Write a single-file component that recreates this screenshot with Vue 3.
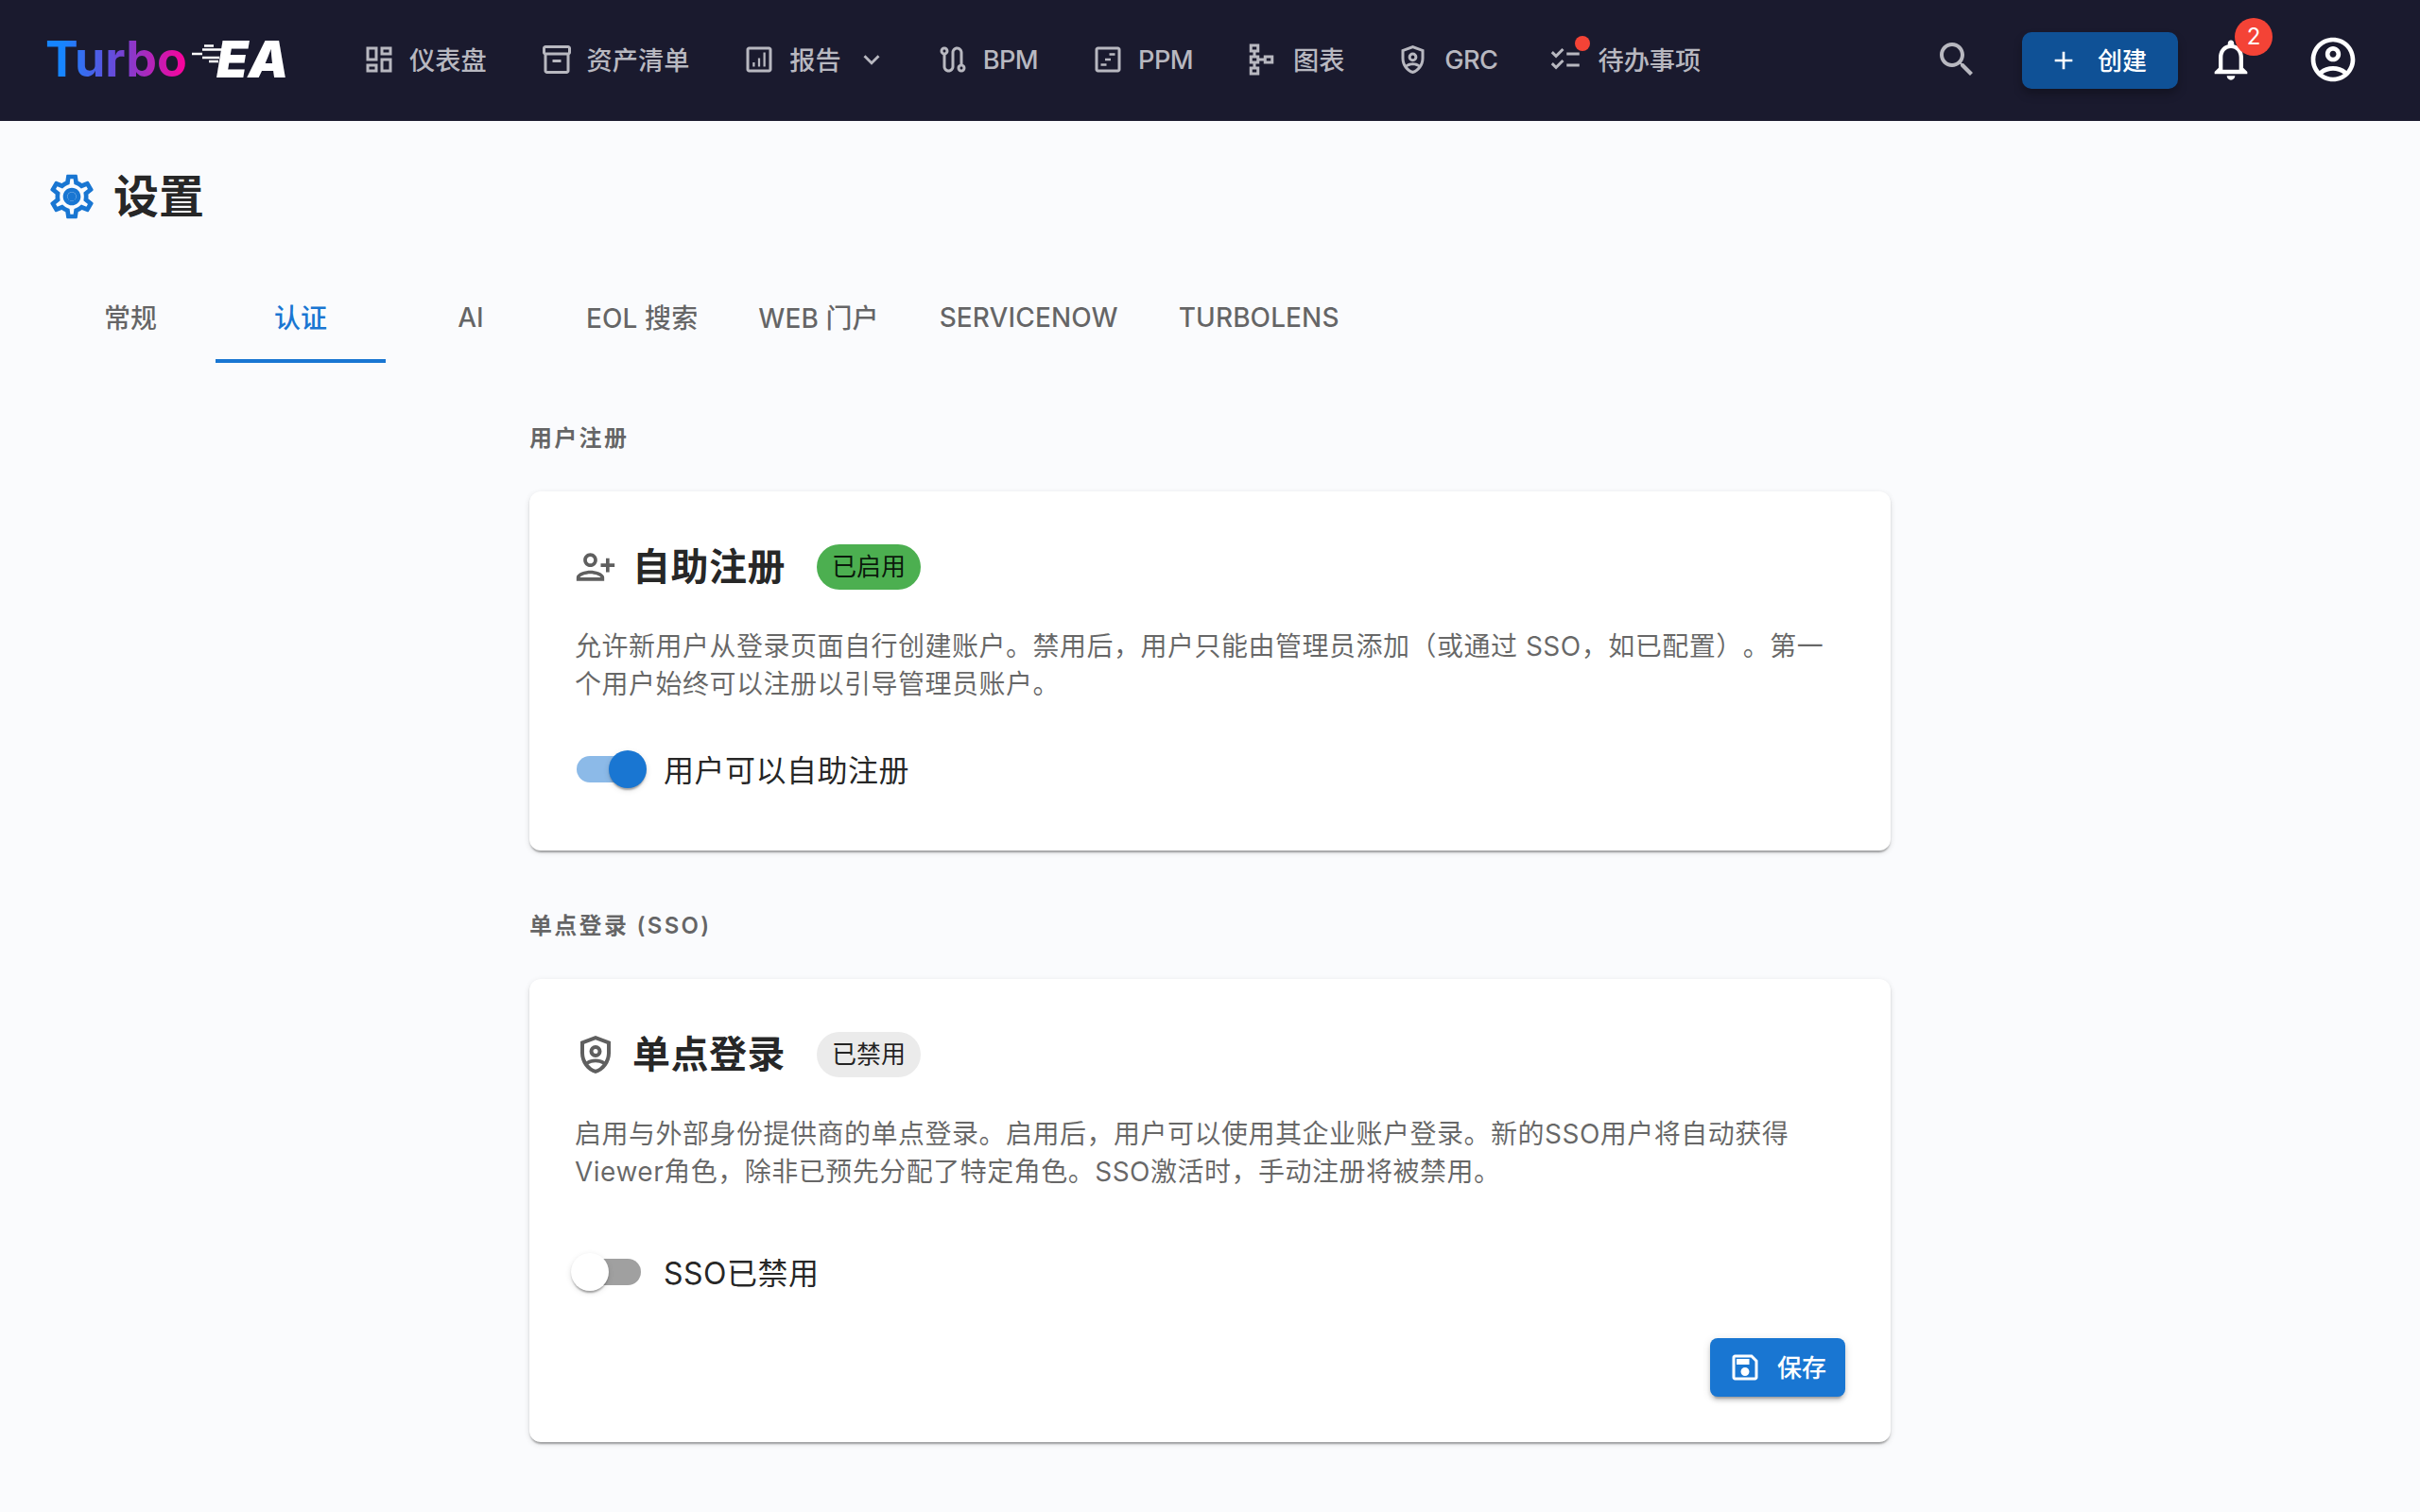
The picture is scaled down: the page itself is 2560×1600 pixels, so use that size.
<template>
  <div class="app">
    <header class="topbar">
      <div class="logo">
        <span class="logo-turbo">Turbo</span>
        <svg class="logo-lines" viewBox="0 0 36 24" aria-hidden="true">
          <path d="M17 1.500h10M15 5.500h22M4 10h11M15 14h18M22 18h10" />
        </svg>
        <span class="logo-ea">EA</span>
      </div>

      <nav class="nav">
        <button v-for="item in navItems" :key="item.label" class="nav-btn">
          <span class="nav-icon">
            <svg :viewBox="item.box || '0 0 24 24'"><path :d="item.icon" /></svg>
            <span v-if="item.dot" class="nav-dot"></span>
          </span>
          <span class="nav-label" :class="{ latin: !hasCjk(item.label) }">{{ item.label }}</span>
          <svg v-if="item.caret" class="nav-caret" viewBox="0 0 24 24"><path :d="icons.caret" /></svg>
        </button>
      </nav>

      <div class="topbar-right">
        <svg class="search-icon" viewBox="0 0 24 24"><path :d="icons.search" /></svg>
        <button class="create-btn">
          <svg viewBox="0 0 24 24"><path d="M19 13h-6v6h-2v-6H5v-2h6V5h2v6h6v2z" /></svg>
          <span class="cjk-text">创建</span>
        </button>
        <div class="bell">
          <svg viewBox="0 0 24 24"><path :d="icons.bell" /></svg>
          <span class="bell-badge">2</span>
        </div>
        <svg class="account-icon" viewBox="0 0 24 24"><path :d="icons.account" /></svg>
      </div>
    </header>

    <main class="page">
      <div class="page-title">
        <svg viewBox="0 0 24 24">
          <path :d="icons.gear" />
          <circle cx="12" cy="12" r="2" />
        </svg>
        <h1>设置</h1>
      </div>

      <div class="tabs">
        <button
          v-for="tab in tabs"
          :key="tab"
          class="tab"
          :class="{ active: tab === activeTab, 'tab-cjk': hasCjk(tab) }"
          @click="activeTab = tab"
        >{{ tab }}</button>
      </div>

      <section class="settings">
        <h6 class="section-label">用户注册</h6>
        <div class="card">
          <div class="card-head">
            <svg class="person" viewBox="0 0 24 24"><path :d="icons.personAdd" /></svg>
            <h2>自助注册</h2>
            <span class="chip" :class="selfSignup ? 'chip-on' : 'chip-off'">{{ selfSignup ? '已启用' : '已禁用' }}</span>
          </div>
          <p class="desc">允许新用户从登录页面自行创建账户。禁用后，用户只能由管理员添加（或通过 SSO，如已配置）。第一个用户始终可以注册以引导管理员账户。</p>
          <label class="switch-row" @click.prevent="selfSignup = !selfSignup">
            <span class="switch" :class="{ on: selfSignup }"><span class="track"></span><span class="thumb"></span></span>
            <span class="cjk-text">用户可以自助注册</span>
          </label>
        </div>

        <h6 class="section-label second">单点登录 (SSO)</h6>
        <div class="card">
          <div class="card-head">
            <svg class="shield" viewBox="0 0 24 24"><path :d="icons.shield" /></svg>
            <h2>单点登录</h2>
            <span class="chip" :class="sso ? 'chip-on' : 'chip-off'">{{ sso ? '已启用' : '已禁用' }}</span>
          </div>
          <p class="desc desc-sso">启用与外部身份提供商的单点登录。启用后，用户可以使用其企业账户登录。新的SSO用户将自动获得Viewer角色，除非已预先分配了特定角色。SSO激活时，手动注册将被禁用。</p>
          <label class="switch-row" @click.prevent="sso = !sso">
            <span class="switch" :class="{ on: sso }"><span class="track"></span><span class="thumb"></span></span>
            <span class="cjk-text">{{ sso ? 'SSO已启用' : 'SSO已禁用' }}</span>
          </label>
          <div class="card-actions">
            <button class="save-btn">
              <svg viewBox="0 0 24 24"><path :d="icons.save" /></svg>
              <span class="cjk-text">保存</span>
            </button>
          </div>
        </div>
      </section>
    </main>
  </div>
</template>

<script setup>
import { ref } from 'vue';

const shieldPath = 'M12 2 4 5v6.1c0 5 3.4 9.7 8 10.9 4.6-1.2 8-5.900 8-10.900V5l-8-3zm6 9.100c0 1.600-.4 3.100-1.200 4.500-1.300-.9-3-1.400-4.800-1.400s-3.500.5-4.800 1.400C6.400 14.200 6 12.700 6 11.100V6.400l6-2.250 6 2.250v4.700zM12 7a3.250 3.250 0 1 0 0 6.500A3.250 3.250 0 0 0 12 7zm0 2a1.250 1.250 0 1 1 0 2.500A1.250 1.250 0 0 1 12 9zm0 10.900c-1.500-.5-2.800-1.500-3.800-2.800 1-.6 2.300-1 3.800-1s2.800.4 3.800 1c-1 1.300-2.300 2.300-3.800 2.800z';

const icons = {
  caret: 'M7.41 8.59 12 13.17l4.59-4.58L18 10l-6 6-6-6z',
  search: 'M15.5 14h-.79l-.28-.27C15.41 12.59 16 11.11 16 9.5 16 5.910 13.090 3 9.500 3S3 5.910 3 9.500 5.910 16 9.500 16c1.610 0 3.090-.59 4.230-1.570l.27.28v.79l5 4.990L20.490 19l-4.990-5zm-6 0C7.010 14 5 11.990 5 9.500S7.010 5 9.500 5 14 7.010 14 9.500 11.990 14 9.500 14z',
  bell: 'M12 22c1.100 0 2-.9 2-2h-4c0 1.100.9 2 2 2zm6-6v-5c0-3.070-1.630-5.640-4.500-6.320V4c0-.83-.67-1.500-1.500-1.500s-1.500.67-1.500 1.500v.68C7.640 5.360 6 7.920 6 11v5l-2 2v1h16v-1l-2-2zm-2 1H8v-6c0-2.480 1.510-4.500 4-4.500s4 2.020 4 4.500v6z',
  account: 'M12 2C6.480 2 2 6.480 2 12s4.480 10 10 10 10-4.480 10-10S17.520 2 12 2zM7.350 18.500C8.660 17.560 10.260 17 12 17s3.340.56 4.650 1.500c-1.310.94-2.910 1.500-4.650 1.500s-3.340-.56-4.650-1.500zm10.790-1.380C16.450 15.800 14.320 15 12 15s-4.450.8-6.140 2.120C4.700 15.730 4 13.950 4 12c0-4.420 3.580-8 8-8s8 3.580 8 8c0 1.950-.7 3.730-1.860 5.120zM12 6c-1.930 0-3.500 1.570-3.500 3.500S10.070 13 12 13s3.500-1.570 3.500-3.500S13.930 6 12 6zm0 5c-.83 0-1.500-.67-1.500-1.500S11.170 8 12 8s1.500.67 1.500 1.500S12.830 11 12 11z',
  gear: 'M19.430 12.980c.04-.32.07-.64.07-.98 0-.34-.03-.66-.07-.98l2.110-1.650c.19-.15.24-.42.12-.64l-2-3.460c-.09-.16-.26-.25-.44-.25-.06 0-.12.01-.17.03l-2.490 1c-.52-.4-1.080-.73-1.690-.98l-.38-2.650C14.460 2.180 14.250 2 14 2h-4c-.25 0-.46.18-.49.42l-.38 2.650c-.61.25-1.170.59-1.690.98l-2.490-1c-.06-.02-.12-.03-.18-.03-.17 0-.34.09-.43.25l-2 3.460c-.13.22-.07.49.12.64l2.110 1.650c-.04.32-.07.65-.07.98 0 .33.03.66.07.98l-2.110 1.650c-.19.15-.24.42-.12.64l2 3.460c.09.16.26.25.44.25.06 0 .12-.01.17-.03l2.490-1c.52.4 1.080.73 1.690.98l.38 2.650c.03.24.24.42.49.42h4c.25 0 .46-.18.49-.42l.38-2.650c.61-.25 1.170-.59 1.690-.98l2.490 1c.06.02.12.03.18.03.17 0 .34-.09.43-.25l2-3.460c.12-.22.07-.49-.12-.64l-2.110-1.650zm-1.980-1.710c.04.31.05.52.05.73 0 .21-.02.43-.05.73l-.14 1.130.89.7 1.080.84-.7 1.210-1.270-.51-1.040-.42-.9.68c-.43.32-.84.56-1.250.73l-1.060.43-.16 1.130-.2 1.350h-1.400l-.19-1.350-.16-1.130-1.060-.43c-.43-.18-.83-.41-1.230-.71l-.91-.7-1.060.43-1.270.51-.7-1.210 1.080-.84.89-.7-.14-1.130c-.03-.31-.05-.54-.05-.74s.02-.43.05-.73l.14-1.130-.89-.7-1.080-.84.7-1.210 1.270.51 1.040.42.9-.68c.43-.32.84-.56 1.250-.73l1.060-.43.16-1.130.2-1.350h1.390l.19 1.350.16 1.130 1.060.43c.43.18.83.41 1.230.71l.91.7 1.060-.43 1.270-.51.7 1.210-1.070.85-.89.7.14 1.130zM12 8c-2.210 0-4 1.790-4 4s1.790 4 4 4 4-1.790 4-4-1.790-4-4-4zm0 6c-1.100 0-2-.9-2-2s.9-2 2-2 2 .9 2 2-.9 2-2 2z',
  personAdd: 'M13 8c0-2.210-1.790-4-4-4S5 5.790 5 8s1.790 4 4 4 4-1.790 4-4zm-2 0c0 1.100-.9 2-2 2s-2-.9-2-2 .9-2 2-2 2 .9 2 2zM1 18v2h16v-2c0-2.660-5.330-4-8-4s-8 1.340-8 4zm2 0c.2-.71 3.300-2 6-2 2.690 0 5.780 1.280 6 2H3zm17-3v-3h3v-2h-3V7h-2v3h-3v2h3v3h2z',
  shield: shieldPath,
  save: 'M17 3H5c-1.110 0-2 .9-2 2v14c0 1.100.89 2 2 2h14c1.100 0 2-.9 2-2V7l-4-4zm2 16H5V5h11.170L19 7.830V19zm-7-7c-1.660 0-3 1.340-3 3s1.340 3 3 3 3-1.340 3-3-1.340-3-3-3zM6 6h9v4H6V6z'
};

const navItems = [
  { label: '仪表盘', icon: 'M19 5v2h-4V5h4M9 5v6H5V5h4m10 8v6h-4v-6h4M9 17v2H5v-2h4M21 3h-8v6h8V3zM11 3H3v10h8V3zm10 8h-8v10h8V11zm-10 4H3v6h8v-6z' },
  { label: '资产清单', icon: 'M20 2H4c-1 0-2 .9-2 2v3.010c0 .72.43 1.340 1 1.690V20c0 1.100 1.100 2 2 2h14c.9 0 2-.9 2-2V8.700c.57-.35 1-.97 1-1.690V4c0-1.100-1-2-2-2zm-1 18H5V9h14v11zm1-13H4V4h16v3zM9 12h6v2H9z' },
  { label: '报告', caret: true, icon: 'M19 3H5c-1.100 0-2 .9-2 2v14c0 1.100.9 2 2 2h14c1.100 0 2-.9 2-2V5c0-1.100-.9-2-2-2zm0 16H5V5h14v14zM7.500 14H9v3H7.500zm3.750-3h1.500v6h-1.500zM15 7h1.500v10H15z' },
  { label: 'BPM', icon: 'M19 15.180V7c0-2.210-1.790-4-4-4s-4 1.790-4 4v10c0 1.100-.9 2-2 2s-2-.9-2-2V8.820C8.160 8.400 9 7.300 9 6c0-1.660-1.340-3-3-3S3 4.340 3 6c0 1.300.84 2.400 2 2.820V17c0 2.210 1.790 4 4 4s4-1.790 4-4V7c0-1.100.9-2 2-2s2 .9 2 2v8.180c-1.160.41-2 1.510-2 2.820 0 1.660 1.340 3 3 3s3-1.340 3-3c0-1.300-.84-2.400-2-2.820zM6 7c-.55 0-1-.45-1-1s.45-1 1-1 1 .45 1 1-.45 1-1 1zm12 12c-.55 0-1-.45-1-1s.45-1 1-1 1 .45 1 1-.45 1-1 1z' },
  { label: 'PPM', icon: 'M19 3H5c-1.100 0-2 .9-2 2v14c0 1.100.9 2 2 2h14c1.100 0 2-.9 2-2V5c0-1.100-.9-2-2-2zm0 16H5V5h14v14zM13 7.500h4v1.600h-4zM10 11.200h4v1.600h-4zM7 14.900h4v1.600H7z' },
  { label: '图表', box: '1.500 0 24 24', icon: 'M14 9v2h-3V9H8.500V7H11V1H4v6h2.500v2H4v6h2.500v2H4v6h7v-6H8.500v-2H11v-2h3v2h7V9h-7zM6 3h3v2H6V3zm3 18H6v-2h3v2zm0-8H6v-2h3v2zm10 0h-3v-2h3v2z' },
  { label: 'GRC', box: '1 0 24 24', icon: shieldPath },
  { label: '待办事项', dot: true, box: '1.500 0 24 24', icon: 'M22 7h-9v2h9V7zm0 8h-9v2h9v-2zM5.540 11 2 7.460l1.410-1.410 2.120 2.120 4.240-4.240 1.410 1.410L5.540 11zm0 8L2 15.460l1.410-1.410 2.120 2.120 4.240-4.240 1.410 1.410L5.540 19z' }
];

const tabs = ['常规', '认证', 'AI', 'EOL 搜索', 'WEB 门户', 'SERVICENOW', 'TURBOLENS'];
const activeTab = ref('认证');
const selfSignup = ref(true);
const sso = ref(false);

// los textos con chino quedan un poco mas abajo por la fuente de respaldo
const hasCjk = (text) => /[^\x00-\x7f]/.test(text);
</script>

<style>
body {
  background: #fafbfd;
}
</style>

<style scoped>
.app {
  min-height: 1600px;
  font-family: Inter, "Noto Sans CJK SC", sans-serif;
  color: rgba(0, 0, 0, 0.87);
  background: #fafbfd;
  text-spacing-trim: space-all;
}
button { font-family: inherit; border: none; background: none; cursor: pointer; }
.cjk-text { margin-bottom: 3px; }

/* barra superior */
.topbar {
  height: 128px;
  box-sizing: border-box;
  padding: 0 64px 2px 48px;
  background: #1a1a2e;
  display: flex;
  align-items: center;
}
.logo { display: flex; align-items: center; width: 313px; height: 60px; flex-shrink: 0; }
.logo-turbo {
  font-size: 52px;
  font-weight: 700;
  line-height: 60px;
  background: linear-gradient(90deg, #1685ff 0%, #1685ff 12%, #6a48d8 50%, #ff0099 100%);
  -webkit-background-clip: text;
  background-clip: text;
  color: transparent;
}
.logo-lines { width: 36px; height: 24px; margin: -8px -6px 0 1px; overflow: visible; }
.logo-lines path { stroke: #fff; stroke-width: 2.600; fill: none; }
.logo-ea { font-size: 54px; font-weight: 900; font-style: italic; color: #fff; line-height: 60px; }

.nav { display: flex; align-items: center; gap: 10px; }
.nav-btn {
  display: flex;
  align-items: center;
  height: 72px;
  padding: 0 24px;
  font-size: 27.2px;
  font-weight: 500;
  color: #b8b8c0;
  white-space: nowrap;
}
.nav-label { margin-bottom: 3px; }
.nav-label.latin { letter-spacing: -0.6px; margin-bottom: 0; }
.nav-icon { position: relative; display: flex; align-items: center; justify-content: center; width: 40px; height: 40px; margin: 0 12px 0 -4px; }
.nav-icon svg { width: 36px; height: 36px; fill: #b8b8c0; }
.nav-dot {
  position: absolute;
  top: -5px;
  right: -4px;
  width: 16px;
  height: 16px;
  border-radius: 50%;
  background: #f44336;
}
.nav-caret { width: 34px; height: 34px; margin: 0 -5px 0 15px; fill: #b8b8c0; }

.topbar-right { margin-left: auto; display: flex; align-items: center; }
.search-icon { width: 48px; height: 48px; fill: #b8b8c0; margin-right: 45px; }
.create-btn {
  display: flex;
  align-items: center;
  height: 60px;
  width: 165px;
  box-sizing: border-box;
  margin-top: 2px;
  padding: 0 20px 0 28px;
  border-radius: 10px;
  background: #0f5196;
  color: #fff;
  font-size: 26px;
  font-weight: 500;
  box-shadow: 0 6px 10px rgba(0, 0, 0, 0.25);
  margin-right: 30px;
}
.create-btn svg { width: 32px; height: 32px; fill: #fff; margin-right: 20px; }
.bell { position: relative; width: 52px; height: 52px; margin-right: 54px; }
.bell svg { width: 52px; height: 52px; fill: #fff; display: block; }
.bell-badge {
  position: absolute;
  top: -18px;
  left: 30px;
  width: 40px;
  height: 40px;
  border-radius: 50%;
  background: #f44336;
  color: #fff;
  font-size: 24px;
  line-height: 40px;
  text-align: center;
}
.account-icon { width: 56px; height: 56px; fill: #fff; }

/* contenido */
.page { padding: 48px 48px 0; }
.page-title { display: flex; align-items: center; gap: 16px; margin-bottom: 48px; }
.page-title svg { width: 56px; height: 56px; fill: #1976d2; }
.page-title h1 { margin: 0; font-size: 48px; font-weight: 700; line-height: 64px; }

.tabs { display: flex; height: 96px; }
.tab {
  min-width: 180px;
  padding: 0 32px;
  font-size: 28px;
  font-weight: 500;
  letter-spacing: 0.1px;
  color: rgba(0, 0, 0, 0.6);
  border-bottom: 4px solid transparent;
  border-top: 4px solid transparent;
  white-space: nowrap;
}
.tab-cjk { padding-bottom: 3px; }
.tab.active { color: #1976d2; border-bottom-color: #1976d2; }

.settings { width: 1440px; margin: 48px auto 0; }
.section-label {
  margin: 0 0 24px;
  font-size: 24px;
  font-weight: 600;
  line-height: 64px;
  letter-spacing: 2.300px;
  color: rgba(0, 0, 0, 0.6);
}
.section-label.second { margin-top: 48px; }

.card {
  padding: 48px;
  border-radius: 12px;
  background: #fff;
  box-shadow: 0 4px 2px -2px rgba(0, 0, 0, 0.2), 0 2px 2px 0 rgba(0, 0, 0, 0.14), 0 2px 6px 0 rgba(0, 0, 0, 0.12);
}
.card-head { display: flex; align-items: center; height: 64px; margin-bottom: 32px; }
.card-head svg { fill: #5f5f5f; flex-shrink: 0; }
.card-head .person { width: 44px; height: 44px; margin-right: 17px; }
.card-head .shield { width: 48px; height: 48px; margin: 0 15px 0 -2px; }
.card-head h2 { margin: 0 33px 0 0; font-size: 40px; font-weight: 700; line-height: 64px; letter-spacing: 0.5px; }
.chip {
  height: 48px;
  padding: 0 16px;
  border-radius: 24px;
  font-size: 26px;
  line-height: 48px;
}
.chip-on { background: #4caf50; }
.chip-off { background: #ebebeb; }

.desc { margin: 0 0 32px; font-size: 28px; line-height: 40px; letter-spacing: 0.5px; color: rgba(0, 0, 0, 0.6); }
.desc-sso { margin-bottom: 48px; }

.switch-row { display: flex; align-items: center; height: 76px; margin-left: -22px; font-size: 32px; letter-spacing: 0.5px; cursor: pointer; }
.switch { position: relative; display: block; width: 116px; height: 76px; flex-shrink: 0; }
.track {
  position: absolute;
  left: 24px;
  top: 24px;
  width: 68px;
  height: 28px;
  border-radius: 14px;
  background: #a0a0a0;
}
.thumb {
  position: absolute;
  left: 18px;
  top: 18px;
  width: 40px;
  height: 40px;
  border-radius: 50%;
  background: #fff;
  box-shadow: 0 4px 2px -2px rgba(0, 0, 0, 0.2), 0 2px 2px 0 rgba(0, 0, 0, 0.14), 0 2px 6px 0 rgba(0, 0, 0, 0.12);
}
.switch.on .track { background: #8cbae8; }
.switch.on .thumb { left: 58px; background: #1976d2; }

.card-actions { display: flex; justify-content: flex-end; margin-top: 32px; }
.save-btn {
  display: flex;
  align-items: center;
  height: 62px;
  padding: 0 20px 0 19px;
  border-radius: 8px;
  background: #1976d2;
  color: #fff;
  font-size: 26px;
  font-weight: 500;
  box-shadow: 0 6px 2px -4px rgba(0, 0, 0, 0.2), 0 4px 4px 0 rgba(0, 0, 0, 0.14), 0 2px 10px 0 rgba(0, 0, 0, 0.12);
}
.save-btn svg { width: 36px; height: 36px; fill: #fff; margin-right: 16px; }
</style>
